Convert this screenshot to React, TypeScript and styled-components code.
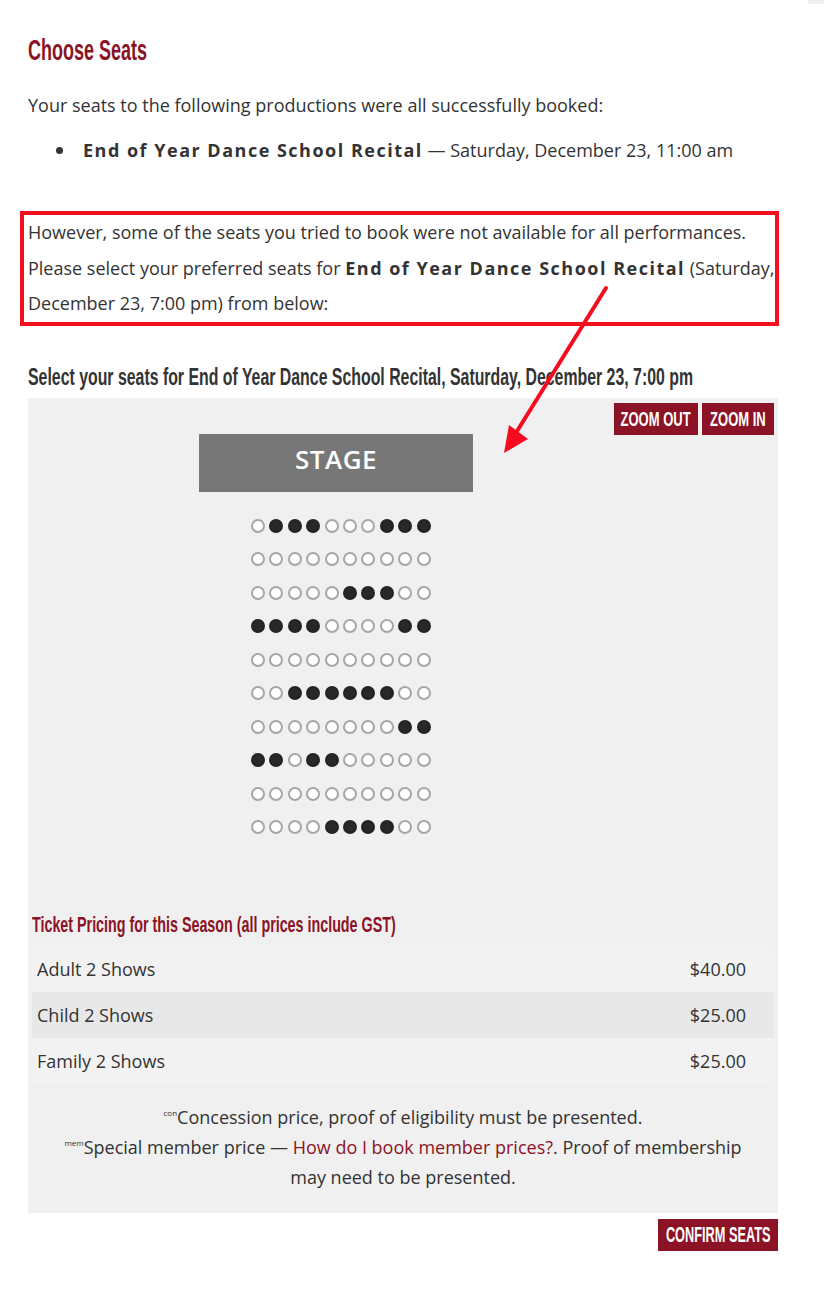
import React from "react";
import styled, { createGlobalStyle } from "styled-components";

const GlobalStyle = createGlobalStyle`
  html, body { margin: 0; padding: 0; background: #ffffff; }
  body {
    font-family: "Open Sans", "Noto Sans", sans-serif;
    color: #333333;
    font-size: 18px;
  }
`;

const condensed = `"Liberation Sans", Arial, sans-serif`;
const wine = "#8c1325";

const Page = styled.div`
  position: relative;
  display: flow-root;
  width: 750px;
  padding: 0 46px 40px 28px;
`;

const SideStub = styled.div`
  position: absolute;
  top: 0;
  left: 808px;
  width: 16px;
  height: 4px;
  background: #f0f0f0;
`;

/* Narrow display face: squeezed horizontally to match the condensed headline font */
const Squeeze = styled.span<{ $sx: number; $origin?: string }>`
  display: inline-block;
  white-space: nowrap;
  transform: scaleX(${(p) => p.$sx});
  transform-origin: ${(p) => p.$origin || "left center"};
`;

const Title = styled.h1`
  margin: 33px 0 0;
  font-family: ${condensed};
  font-weight: 700;
  font-size: 29px;
  line-height: 34px;
  color: ${wine};
  white-space: nowrap;
`;

const Para = styled.p`
  margin: 26px 0 0;
  line-height: 24px;
`;

const List = styled.ul`
  margin: 21px 0 0;
  padding-left: 28px;
  list-style: none;
  line-height: 24px;
`;

const Item = styled.li`
  display: flex;
  align-items: center;
  &::before {
    content: "";
    flex-shrink: 0;
    width: 7px;
    height: 7px;
    border-radius: 50%;
    background: #333333;
    margin-right: 20px;
  }
`;

const Show = styled.strong`
  font-weight: 700;
  letter-spacing: 1.5px;
`;

const Notice = styled.div`
  margin: 49px -1px 0 -8px;
  border: 4px solid #f2101f;
  padding: 0 0 0 4px;
  line-height: 35.5px;
`;

const Subhead = styled.h2`
  margin: 37px 0 0;
  font-family: ${condensed};
  font-weight: 700;
  font-size: 23.5px;
  line-height: 28px;
  color: #333333;
  white-space: nowrap;
  overflow-x: clip;
`;

const Panel = styled.section`
  position: relative;
  margin-top: 7px;
  background: #f0f0f0;
  padding: 36px 4px 21px;
`;

const ZoomBar = styled.div`
  position: absolute;
  top: 5px;
  right: 4px;
  display: flex;
  gap: 4px;
`;

const RedButton = styled.button<{ $w: number; $size: number }>`
  width: ${(p) => p.$w}px;
  height: 32px;
  border: 0;
  padding: 0;
  display: flex;
  align-items: center;
  justify-content: center;
  overflow: visible;
  background: ${wine};
  color: #ffffff;
  font-family: ${condensed};
  font-weight: 700;
  font-size: ${(p) => p.$size}px;
  white-space: nowrap;
  cursor: pointer;
`;

const SeatMap = styled.div`
  display: flex;
  flex-direction: column;
  align-items: flex-start;
  padding-left: 167px;
`;

const Stage = styled.div`
  width: 274px;
  height: 58px;
  background: #777777;
  color: #ffffff;
  display: flex;
  align-items: center;
  justify-content: center;
  font-size: 26px;
  font-weight: 600;
  letter-spacing: 0.5px;
  padding-bottom: 8px;
  box-sizing: border-box;
`;

const Rows = styled.div`
  margin: 27px 0 0 52px;
  display: flex;
  flex-direction: column;
  gap: 19.55px;
`;

const Row = styled.div`
  display: flex;
  gap: 4.4px;
`;

const Seat = styled.span<{ $taken: boolean }>`
  width: 14px;
  height: 14px;
  box-sizing: border-box;
  border-radius: 50%;
  background: ${(p) => (p.$taken ? "#282828" : "#ffffff")};
  border: 2px solid ${(p) => (p.$taken ? "#232323" : "#a6a6a6")};
`;

const PriceHead = styled.h3`
  margin: 79px 0 0;
  font-family: ${condensed};
  font-weight: 700;
  font-size: 22px;
  line-height: 24px;
  color: ${wine};
  white-space: nowrap;
`;

const PriceTable = styled.div`
  margin-top: 9px;
  display: flex;
  flex-direction: column;
`;

const PriceRow = styled.div<{ $alt: boolean }>`
  height: 46px;
  display: flex;
  align-items: center;
  justify-content: space-between;
  padding: 0 28px 0 5px;
  background: ${(p) => (p.$alt ? "#e8e8e8" : "#f2f2f2")};
`;

const Notes = styled.div`
  margin-top: 18px;
  padding: 0 24px;
  text-align: center;
  line-height: 30px;
`;

const Sup = styled.sup`
  font-size: 8px;
  vertical-align: 8px;
  line-height: 0;
`;

const Link = styled.a`
  color: ${wine};
  text-decoration: none;
`;

const Footer = styled.div`
  display: flex;
  justify-content: flex-end;
  margin-top: 6px;
`;

const Arrow = styled.svg`
  position: absolute;
  left: 490px;
  top: 280px;
  overflow: visible;
`;

const seats = [
  "o***ooo***",
  "oooooooooo",
  "ooooo***oo",
  "****oooo**",
  "oooooooooo",
  "oo******oo",
  "oooooooo**",
  "**o**ooooo",
  "oooooooooo",
  "oooo****oo",
];

const prices = [
  ["Adult 2 Shows", "$40.00"],
  ["Child 2 Shows", "$25.00"],
  ["Family 2 Shows", "$25.00"],
];

export default function App() {
  return (
    <>
      <GlobalStyle />
      <Page>
        <SideStub />
        <Title>
          <Squeeze $sx={0.62}>Choose Seats</Squeeze>
        </Title>
        <Para>Your seats to the following productions were all successfully booked:</Para>
        <List>
          <Item>
            <span>
              <Show>End of Year Dance School Recital</Show> — Saturday, December 23, 11:00 am
            </span>
          </Item>
        </List>
        <Notice>
          However, some of the seats you tried to book were not available for all performances.
          <br />
          Please select your preferred seats for <Show>End of Year Dance School Recital</Show>{" "}
          (Saturday, December 23, 7:00 pm) from below:
        </Notice>
        <Subhead>
          <Squeeze $sx={0.675}>Select your seats for End of Year Dance School Recital, Saturday, December 23, 7:00 pm</Squeeze>
        </Subhead>
        <Panel>
          <ZoomBar>
            <RedButton $w={84} $size={21}>
              <Squeeze $sx={0.62} $origin="center">ZOOM OUT</Squeeze>
            </RedButton>
            <RedButton $w={72} $size={21}>
              <Squeeze $sx={0.62} $origin="center">ZOOM IN</Squeeze>
            </RedButton>
          </ZoomBar>
          <SeatMap>
            <Stage>STAGE</Stage>
            <Rows>
              {seats.map((r, i) => (
                <Row key={i}>
                  {r.split("").map((c, j) => (
                    <Seat key={j} $taken={c === "*"} />
                  ))}
                </Row>
              ))}
            </Rows>
          </SeatMap>
          <PriceHead>
            <Squeeze $sx={0.65}>Ticket Pricing for this Season (all prices include GST)</Squeeze>
          </PriceHead>
          <PriceTable>
            {prices.map(([name, price], i) => (
              <PriceRow key={name} $alt={i === 1}>
                <span>{name}</span>
                <span>{price}</span>
              </PriceRow>
            ))}
          </PriceTable>
          <Notes>
            <Sup>con</Sup>Concession price, proof of eligibility must be presented.
            <br />
            <Sup>mem</Sup>Special member price — <Link href="#">How do I book member prices?</Link>. Proof of
            membership may need to be presented.
          </Notes>
        </Panel>
        <Footer>
          <RedButton $w={120} $size={22}>
            <Squeeze $sx={0.58} $origin="center">CONFIRM SEATS</Squeeze>
          </RedButton>
        </Footer>
        <Arrow width="130" height="180" viewBox="0 0 130 180">
          <line x1="116" y1="8" x2="24" y2="156" stroke="#f50a1e" strokeWidth="4" strokeLinecap="round" />
          <polygon points="14,173 19,145 38,159" fill="#f50a1e" />
        </Arrow>
      </Page>
    </>
  );
}
